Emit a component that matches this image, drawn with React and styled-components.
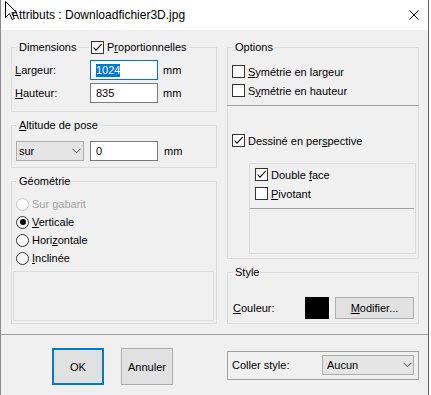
import styled, { createGlobalStyle } from "styled-components";

const GlobalStyle = createGlobalStyle`
  html, body { margin: 0; background: #fff; }
  body {
    font-family: "Liberation Sans", Arial, sans-serif;
    font-size: 11px;
    color: #000;
  }
  * { box-sizing: border-box; }
`;

const Window = styled.div`
  position: relative;
  width: 429px;
  height: 395px;
  border-left: 1px solid #8a8a8a;
  border-right: 1px solid #5f5f5f;
  background: #f0f0f0;
  overflow: hidden;
`;

const TitleBar = styled.div`
  height: 30px;
  background: #fff;
  display: flex;
  align-items: center;
  padding: 0 9px 0 10px;
  font-size: 12px;
`;

const Title = styled.span`
  flex: 1;
`;

const Cursor = styled.svg`
  position: absolute;
  left: 4px;
  top: 1px;
`;

const Body = styled.div`
  padding: 17px 9px 10px 10px;
`;

const Columns = styled.div`
  display: grid;
  grid-template-columns: 206px 192px;
  column-gap: 10px;
  align-items: start;
`;

const Column = styled.div`
  display: flex;
  flex-direction: column;
  gap: ${(p) => p.$gap}px;
`;

const Group = styled.div`
  position: relative;
  height: ${(p) => p.$h}px;
  border: 1px solid #dcdcdc;
  padding: ${(p) => p.$pad};
`;

const Caption = styled.span`
  position: absolute;
  top: -8px;
  left: ${(p) => p.$left ?? 5}px;
  height: 14px;
  line-height: 14px;
  padding: 0 2px;
  background: #f0f0f0;
  display: flex;
  align-items: center;
  gap: 3px;
`;

const Mn = styled.span`
  text-decoration: underline;
  text-underline-offset: 1px;
`;

const FieldGrid = styled.div`
  display: grid;
  grid-template-columns: 75px 68px auto;
  row-gap: 3px;
  align-items: center;
`;

const FieldRow = styled.div`
  display: flex;
  align-items: center;
  gap: 6px;
`;

const Field = styled.div`
  width: 68px;
  height: 20px;
  background: #fff;
  border: 1px solid ${(p) => (p.$focus ? "#0078d7" : "#7a7a7a")};
  padding-left: 5px;
  display: flex;
  align-items: center;
`;

const Selected = styled.span`
  background: #0078d7;
  color: #fff;
  line-height: 13px;
`;

const Unit = styled.span`
  margin-left: 5px;
`;

const Drop = styled.div`
  width: ${(p) => p.$w}px;
  height: 20px;
  background: #e5e5e5;
  border: 1px solid #acacac;
  padding: 0 ${(p) => p.$chev}px 0 ${(p) => p.$left}px;
  display: flex;
  align-items: center;
  justify-content: space-between;
`;

const Row = styled.label`
  display: flex;
  align-items: center;
  gap: 3px;
  height: ${(p) => p.$h ?? 19}px;
  color: ${(p) => (p.$disabled ? "#a0a0a0" : "#000")};
`;

const Box = styled.span`
  width: 13px;
  height: 13px;
  border: 1px solid #333;
  background: #fff;
  display: inline-flex;
  align-items: center;
  justify-content: center;
  flex: none;
`;

const Circle = styled.span`
  width: 13px;
  height: 13px;
  border-radius: 50%;
  border: 1px solid ${(p) => (p.$disabled ? "#c4c4c4" : "#333")};
  background: #fff;
  display: inline-flex;
  align-items: center;
  justify-content: center;
  flex: none;

  &::after {
    content: "";
    width: 6px;
    height: 6px;
    border-radius: 50%;
    background: ${(p) => (p.$on ? "#000" : "transparent")};
  }
`;

const RadioList = styled.div`
  padding-left: 3px;
`;

const Panel = styled.div`
  border: 1px solid #dcdcdc;
  height: ${(p) => p.$h}px;
  margin: ${(p) => p.$m};
  padding: ${(p) => p.$pad ?? 0};
`;

const Line = styled.div`
  height: 1px;
  background: #a0a0a0;
  margin: ${(p) => p.$m};
`;

const StyleRow = styled.div`
  display: flex;
  align-items: center;
  height: 22px;
`;

const StyleLabel = styled.span`
  width: 72px;
`;

const Swatch = styled.span`
  width: 24px;
  height: 22px;
  background: #000;
  margin-right: 6px;
`;

const Button = styled.button`
  font: inherit;
  color: #000;
  width: ${(p) => p.$w}px;
  height: ${(p) => p.$h}px;
  background: #e1e1e1;
  border: ${(p) => (p.$primary ? "2px solid #0078d7" : "1px solid #adadad")};
  padding: 0;
`;

const Footer = styled.div`
  border-top: 1px solid #a0a0a0;
  padding: 13px 9px 0 10px;
  display: grid;
  grid-template-columns: 206px 192px;
  column-gap: 10px;
  align-items: start;
`;

const Buttons = styled.div`
  display: flex;
  gap: 17px;
  padding-left: 41px;
`;

const PasteBox = styled.div`
  margin-top: 3px;
  height: 29px;
  border: 1px solid #a0a0a0;
  padding: 3px 4px 0 4px;
  display: flex;
  align-items: flex-start;
  justify-content: space-between;
`;

const PasteLabel = styled.span`
  line-height: 20px;
`;

function Check({ on }) {
  return (
    <Box>
      {on && (
        <svg width="11" height="11" viewBox="0 0 11 11">
          <polyline points="1.5,5.5 4,8.2 9.6,2.2" fill="none" stroke="#000" strokeWidth="1.1" />
        </svg>
      )}
    </Box>
  );
}

function Chevron() {
  return (
    <svg width="9" height="6" viewBox="0 0 9 6">
      <polyline points="0.5,0.8 4.5,4.8 8.5,0.8" fill="none" stroke="#444" strokeWidth="1" />
    </svg>
  );
}

export default function App() {
  return (
    <>
      <GlobalStyle />
      <Window>
        <TitleBar>
          <Title>Attributs : Downloadfichier3D.jpg</Title>
          <svg width="10" height="10" viewBox="0 0 10 10">
            <path d="M0.5 0.5 L9.5 9.5 M9.5 0.5 L0.5 9.5" stroke="#000" strokeWidth="1" />
          </svg>
        </TitleBar>
        <Cursor width="13" height="20" viewBox="0 0 13 20">
          <path d="M0.5 0.5 L0.5 16.5 L4.5 12.5 L7.2 18.5 L9.4 17.5 L6.8 11.7 L11.8 11.7 Z" fill="#fff" stroke="#000" strokeWidth="1" />
        </Cursor>

        <Body>
          <Columns>
            <Column $gap={13}>
              <Group $h={65} $pad="12px 0 0 3px">
                <Caption>Dimensions</Caption>
                <Caption $left={77}>
                  <Check on />
                  <span>P<Mn>r</Mn>oportionnelles</span>
                </Caption>
                <FieldGrid>
                  <span><Mn>L</Mn>argeur:</span>
                  <Field $focus><Selected>1024</Selected></Field>
                  <Unit>mm</Unit>
                  <span><Mn>H</Mn>auteur:</span>
                  <Field>835</Field>
                  <Unit>mm</Unit>
                </FieldGrid>
              </Group>

              <Group $h={43} $pad="15px 0 0 4px">
                <Caption><span><Mn>A</Mn>ltitude de pose</span></Caption>
                <FieldRow>
                  <Drop $w={68} $left={2} $chev={2}>
                    sur
                    <Chevron />
                  </Drop>
                  <Field>0</Field>
                  <span>mm</span>
                </FieldRow>
              </Group>

              <Group $h={143} $pad="13px 2px 0 1px">
                <Caption>Géométrie</Caption>
                <RadioList>
                  <Row $h={18} $disabled>
                    <Circle $disabled />
                    <span>Sur <Mn>g</Mn>abarit</span>
                  </Row>
                  <Row $h={18}>
                    <Circle $on />
                    <span><Mn>V</Mn>erticale</span>
                  </Row>
                  <Row $h={18}>
                    <Circle />
                    <span>Hori<Mn>z</Mn>ontale</span>
                  </Row>
                  <Row $h={18}>
                    <Circle />
                    <span><Mn>I</Mn>nclinée</span>
                  </Row>
                </RadioList>
                <Panel $h={50} $m="4px 0 0 0" />
              </Group>
            </Column>

            <Column $gap={13}>
              <Group $h={212} $pad="14px 2px 0 4px">
                <Caption>Options</Caption>
                <Row>
                  <Check />
                  <span><Mn>S</Mn>ymétrie en largeur</span>
                </Row>
                <Row>
                  <Check />
                  <span>S<Mn>y</Mn>métrie en hauteur</span>
                </Row>
                <Line $m="5px -3px 0 -5px" />
                <Row style={{ marginTop: 25 }}>
                  <Check on />
                  <span>Dessiné en per<Mn>s</Mn>pective</span>
                </Row>
                <Panel $h={91} $m="13px 0 0 17px" $pad="1px 0 0 5px">
                  <Row>
                    <Check on />
                    <span>Double <Mn>f</Mn>ace</span>
                  </Row>
                  <Row>
                    <Check />
                    <span><Mn>P</Mn>ivotant</span>
                  </Row>
                  <Line $m="5px 1px 0 -5px" />
                </Panel>
              </Group>

              <Group $h={52} $pad="24px 0 0 5px">
                <Caption>Style</Caption>
                <StyleRow>
                  <StyleLabel><Mn>C</Mn>ouleur:</StyleLabel>
                  <Swatch />
                  <Button $w={79} $h={22}><Mn>M</Mn>odifier...</Button>
                </StyleRow>
              </Group>
            </Column>
          </Columns>
        </Body>

        <Footer>
          <Buttons>
            <Button $w={52} $h={37} $primary>OK</Button>
            <Button $w={52} $h={37}>Annuler</Button>
          </Buttons>
          <PasteBox>
            <PasteLabel>Coller style:</PasteLabel>
            <Drop $w={92} $left={4} $chev={1}>
              Aucun
              <Chevron />
            </Drop>
          </PasteBox>
        </Footer>
      </Window>
    </>
  );
}
